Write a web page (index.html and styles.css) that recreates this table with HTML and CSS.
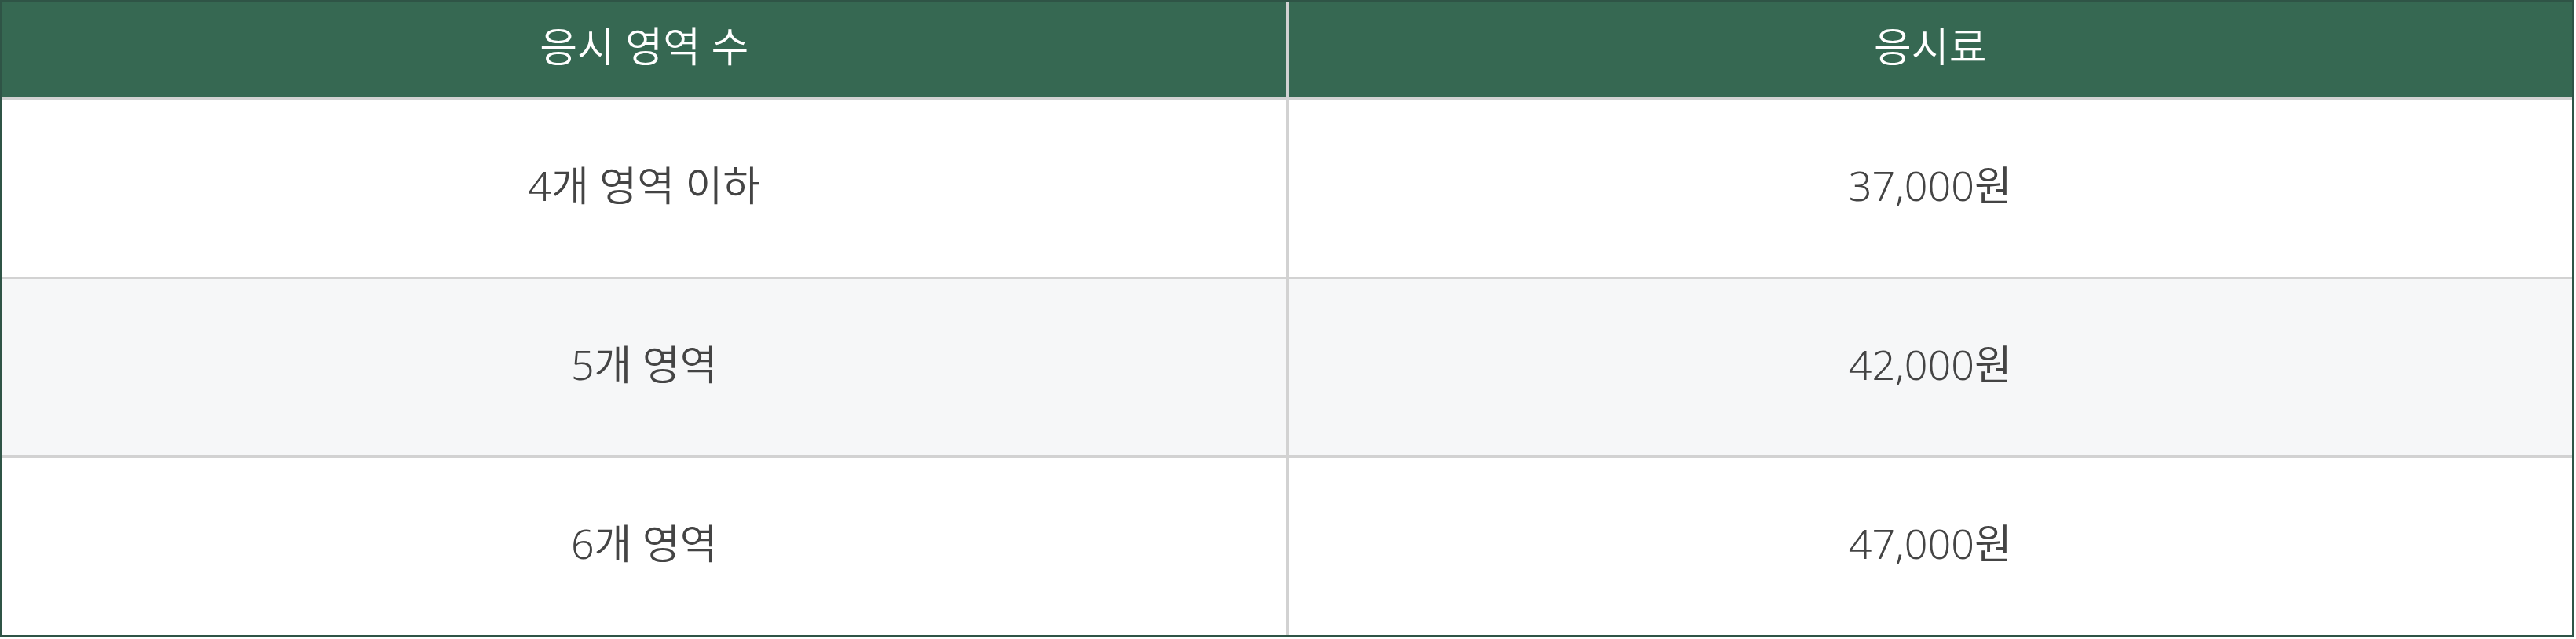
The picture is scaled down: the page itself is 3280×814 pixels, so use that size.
FILE: index.html
```html
<!DOCTYPE html>
<html lang="ko">
<head>
<meta charset="utf-8">
<link rel="stylesheet" href="styles.css">
</head>
<body>
<div class="fee-table">
  <div class="cell head">응시 영역 수</div>
  <div class="cell head">응시료</div>
  <div class="cell">4개 영역 이하</div>
  <div class="cell">37,000원</div>
  <div class="cell alt">5개 영역</div>
  <div class="cell alt">42,000원</div>
  <div class="cell">6개 영역</div>
  <div class="cell">47,000원</div>
</div>
</body>
</html>
```
FILE: styles.css
```css
html, body {
  margin: 0;
  padding: 0;
  background: #ffffff;
}
.fee-table {
  width: 3278px;
  box-sizing: border-box;
  border: 3px solid #2f5446;
  display: grid;
  grid-template-columns: 1fr 1fr;
  grid-template-rows: 121px 226px 224px 226px;
  gap: 3px;
  background: #d2d2d2;
  font-family: "Noto Sans", "Noto Sans CJK KR", sans-serif;
}
.cell {
  display: flex;
  align-items: center;
  justify-content: center;
  box-sizing: border-box;
  padding-bottom: 14px;
  background: #ffffff;
  color: #444444;
  font-size: 52px;
  font-weight: 350;
}
.cell.head {
  background: #366852;
  color: #ffffff;
}
.cell.alt {
  background: #f6f7f8;
}
```
